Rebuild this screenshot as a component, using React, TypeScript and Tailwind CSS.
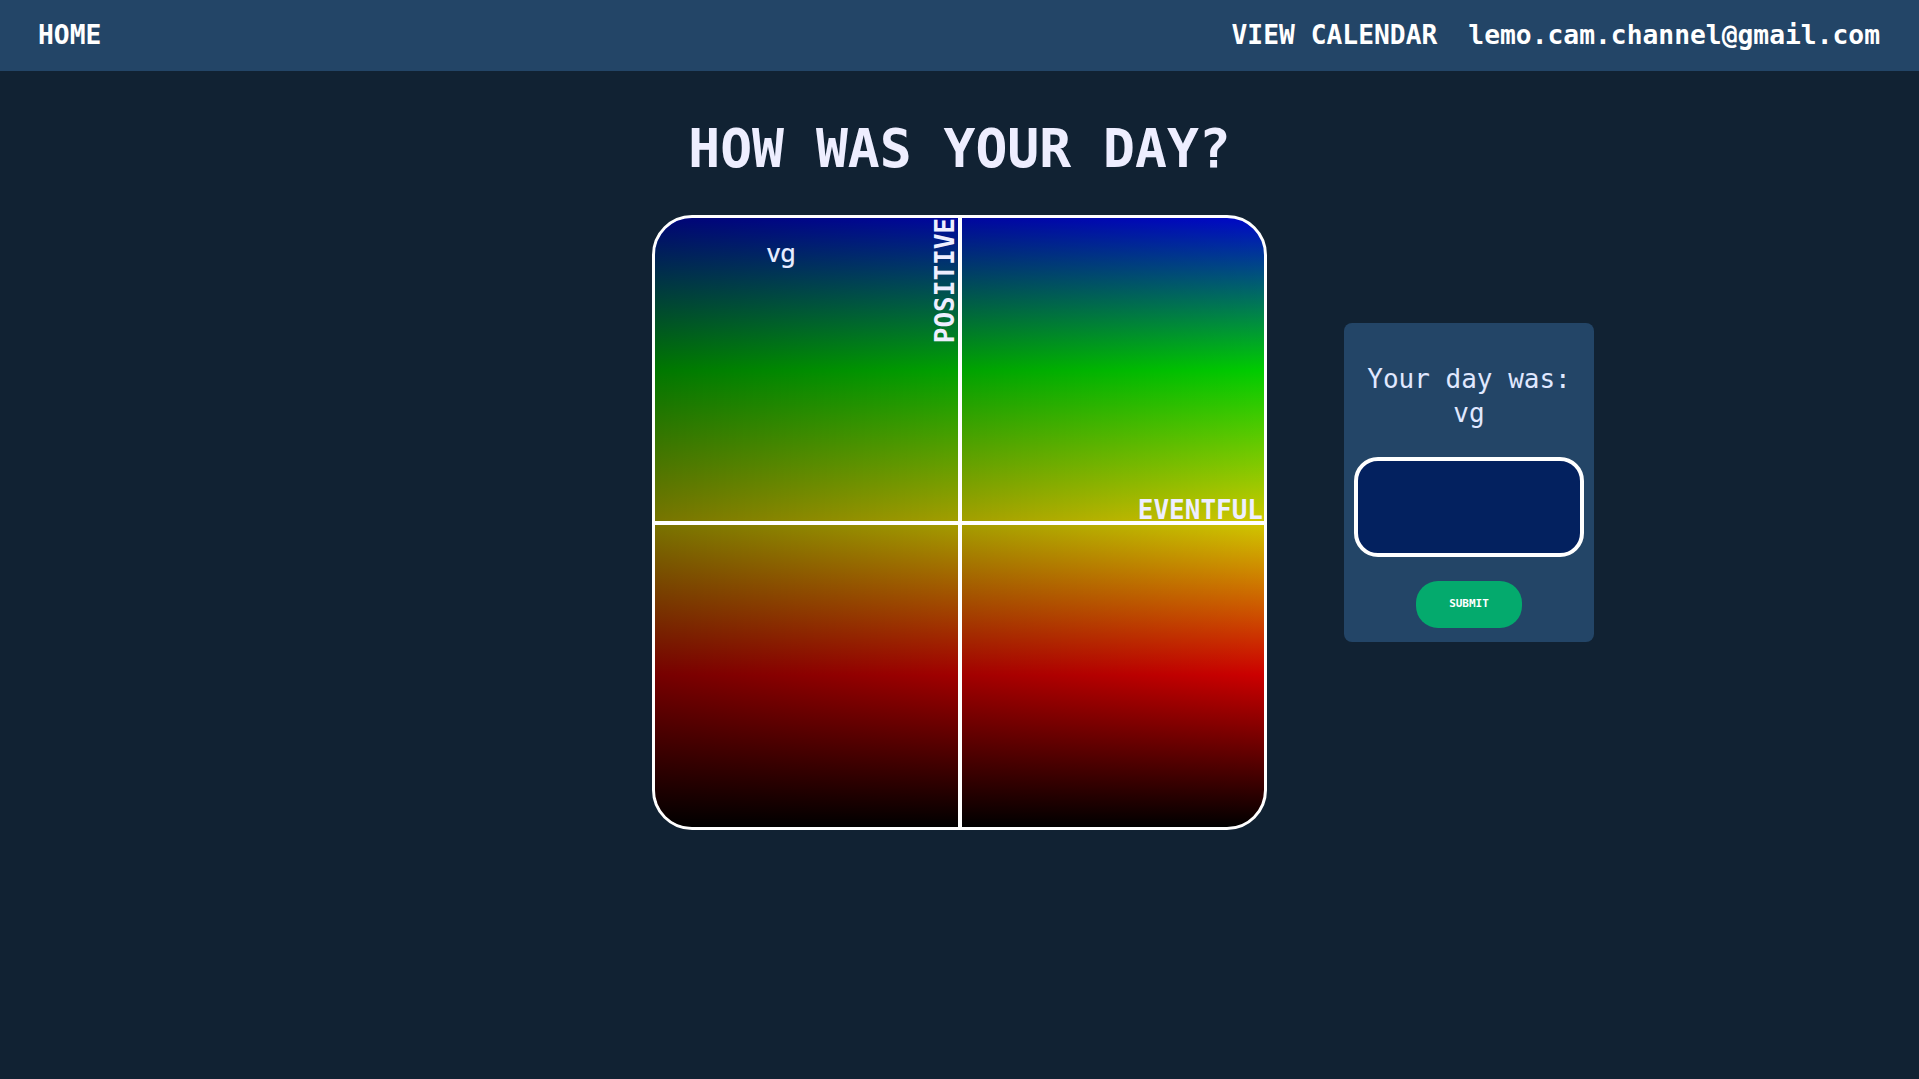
import React, { useState } from "react";

const mono = "font-['DejaVu_Sans_Mono','Liberation_Mono',monospace]";

const MoodGrid: React.FC<{ mood: string }> = ({ mood }) => {
  return (
    <div className="relative w-[615px] h-[615px] rounded-[40px] border-[3px] border-white overflow-hidden bg-[linear-gradient(#0008c8,#00cc00,#d0c800,#cc0000,#000000)]">
      {/* darker on the calm side */}
      <div className="absolute inset-0 bg-[linear-gradient(to_right,rgba(0,0,0,0.42),rgba(0,0,0,0))]" />

      {/* axes */}
      <div className="absolute top-0 bottom-0 left-1/2 -translate-x-1/2 w-[4px] bg-white" />
      <div className="absolute left-0 right-0 top-1/2 -translate-y-1/2 h-[4px] bg-white" />

      <span
        className={`absolute top-0 right-[calc(50%+2px)] ${mono} font-bold text-[26px] leading-none text-[#eeeeff] [writing-mode:vertical-rl] rotate-180`}
      >
        POSITIVE
      </span>
      <span
        className={`absolute right-[1px] bottom-1/2 ${mono} font-bold text-[26px] leading-none text-[#eeeeff]`}
      >
        EVENTFUL
      </span>

      {/* picked point */}
      <span className="absolute left-[112px] top-[22px] font-['Noto_Sans','Open_Sans',sans-serif] font-medium text-[25px] leading-none text-[#e6ecff]">
        {mood}
      </span>
    </div>
  );
};

export default function App() {
  const [mood] = useState("vg");
  const [note, setNote] = useState("");

  return (
    <div className="min-h-screen bg-[#112233] text-white">
      <nav
        className={`flex items-center justify-between h-[71px] pl-[38px] pr-[39px] bg-[#234567] ${mono} font-bold text-[26.3px] leading-none`}
      >
        <a href="#" className="text-white">HOME</a>
        <div className="flex items-center gap-[31px]">
          <a href="#" className="text-white">VIEW CALENDAR</a>
          <span>lemo.cam.channel@gmail.com</span>
        </div>
      </nav>

      <main className="flex flex-col items-center">
        <h1
          className={`mt-[47px] ${mono} font-bold text-[53px] leading-[62px] text-[#eeeeff]`}
        >
          HOW WAS YOUR DAY?
        </h1>

        <div className="mt-[35px] w-full grid grid-cols-[1fr_auto_1fr] items-start">
          <div />
          <MoodGrid mood={mood} />
          <div className="justify-self-start ml-[77px] mt-[108px] w-[250px] rounded-[8px] bg-[#234567] pt-[39px] px-[10px] pb-[14px] flex flex-col items-center">
            <p
              className={`${mono} text-[26px] leading-[34px] text-[#e0e8ff] text-center`}
            >
              Your day was: {mood}
            </p>
            <textarea
              value={note}
              onChange={(e) => setNote(e.target.value)}
              className="mt-[27px] w-[230px] h-[100px] resize-none rounded-[24px] border-[4px] border-white bg-[#03215f] outline-none p-3 text-white"
            />
            <button
              className={`mt-[24px] w-[106px] h-[47px] rounded-[22px] bg-[#04aa6d] ${mono} font-bold text-[11px] text-white`}
            >
              SUBMIT
            </button>
          </div>
        </div>
      </main>
    </div>
  );
}
